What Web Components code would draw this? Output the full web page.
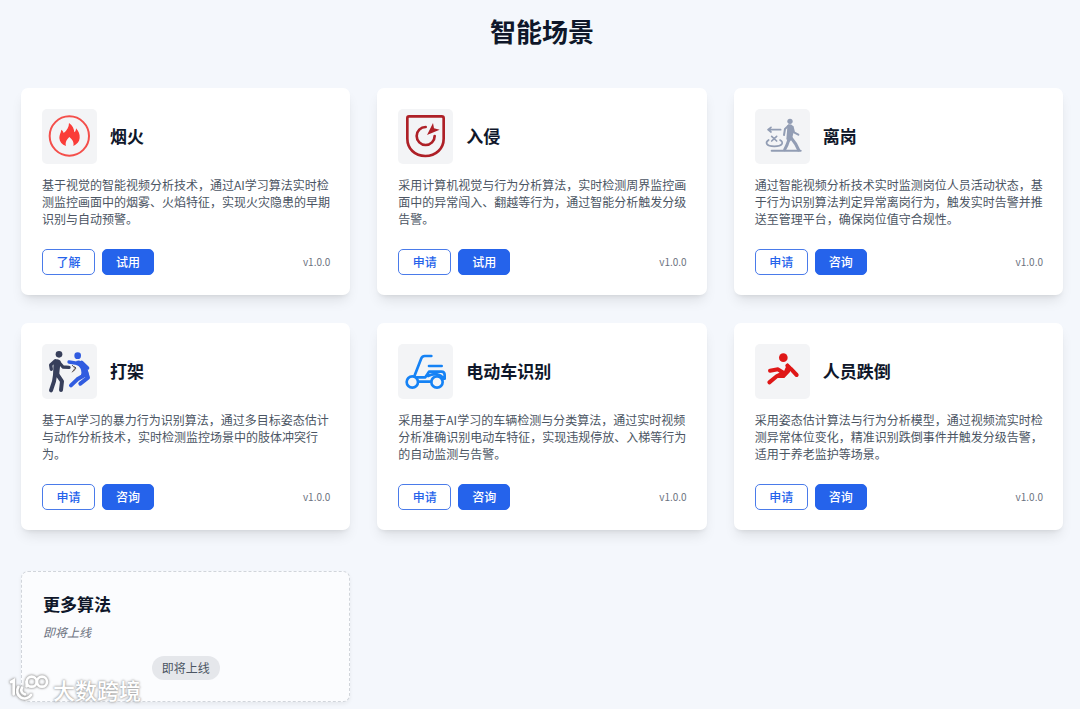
<!DOCTYPE html>
<html lang="zh-CN">
<head>
<meta charset="utf-8">
<meta name="viewport" content="width=device-width, initial-scale=1">
<title>智能场景</title>
<style>
  body { margin: 0; background: #f4f7fc; color: #0f172a; font-family: "Noto Sans CJK SC", sans-serif; }
</style>
</head>
<body>
<scene-page></scene-page>

<template id="page-template">
  <style>
    :host { display: block; position: relative; min-height: 100vh; box-sizing: border-box; padding: 12px 17px 7px 21px; }
    h1 { margin: 0 0 38px; font-size: 26px; line-height: 38px; font-weight: 700; text-align: center; }
    .grid { display: grid; grid-template-columns: repeat(3, minmax(0, 1fr)); column-gap: 27px; row-gap: 28px; }
    more-card { margin-top: 13px; }
    svg { display: block; width: 100%; height: 100%; }
    brand-mark { position: absolute; left: 9px; top: 673px; }
    @media (max-width: 860px) { .grid { grid-template-columns: repeat(2, minmax(0, 1fr)); } }
    @media (max-width: 560px) { .grid { grid-template-columns: minmax(0, 1fr); } }
  </style>
  <h1>智能场景</h1>
  <main class="grid">
    <scene-card name="烟火" secondary="了解" primary="试用" version="v1.0.0">
      <svg slot="icon" viewBox="18 15 165 165" aria-hidden="true">
        <circle cx="100" cy="96" r="59" fill="none" stroke="#f44f4b" stroke-width="6"/>
        <path fill="#fa3c38" d="M99 57c11 8 15 17 16 28 4-3 5-7 5-12 8 9 12 18 11 29-1 12-8 19-19 24 3-10-3-20-12-27-8 7-13 17-10 27-12-4-19-12-20-24 0-10 4-14 6-25 4 3 6 6 7 10 10-8 16-17 16-30z"/>
      </svg>
      基于视觉的智能视频分析技术，通过AI学习算法实时检测监控画面中的烟雾、火焰特征，实现火灾隐患的早期识别与自动预警。
    </scene-card>
    <scene-card name="入侵" secondary="申请" primary="试用" version="v1.0.0">
      <svg slot="icon" viewBox="18 15 165 165" aria-hidden="true">
        <g fill="none" stroke="#ae2027" stroke-width="8" stroke-linecap="round" stroke-linejoin="round">
          <path d="M51 37H149Q155 37 155 43V104C155 133 132 156 100 156S46 133 46 104V43Q46 37 51 37z"/>
          <path d="M101 69A27 27 0 1 0 128 96"/>
        </g>
        <path fill="#ae2027" d="M105 93L123 57L126 73L143 77z"/>
      </svg>
      采用计算机视觉与行为分析算法，实时检测周界监控画面中的异常闯入、翻越等行为，通过智能分析触发分级告警。
    </scene-card>
    <scene-card name="离岗" secondary="申请" primary="咨询" version="v1.0.0">
      <svg slot="icon" viewBox="18 15 165 165" aria-hidden="true">
        <g fill="none" stroke="#929db4" stroke-width="5" stroke-linecap="round" stroke-linejoin="round">
          <path d="M95 77H58M66 70l-9 7 9 7M68 97l15 14M83 97l-15 14"/>
          <path d="M59 108c-11 7-9 19 17 19s29-12 17-19"/>
          <path d="M68 140H155" stroke-width="6"/>
          <path d="M119 64l-11 11-3 18M131 68l4 17 13 7" stroke-width="6"/>
          <path d="M120 106l-6 17-7 14M126 101l14 19 9 18" stroke-width="9"/>
        </g>
        <circle cx="123" cy="52" r="8" fill="#929db4"/>
        <path fill="#929db4" d="M115 64q8-6 15 0l4 20-5 21-7 8-10-7 2-23z"/>
      </svg>
      通过智能视频分析技术实时监测岗位人员活动状态，基于行为识别算法判定异常离岗行为，触发实时告警并推送至管理平台，确保岗位值守合规性。
    </scene-card>
    <scene-card name="打架" secondary="申请" primary="咨询" version="v1.0.0">
      <svg slot="icon" viewBox="18 15 165 165" aria-hidden="true">
        <g fill="none" stroke-linecap="round" stroke-linejoin="round">
          <g stroke="#373f5b">
            <path d="M58 65l-14 13 2 13M68 69l13 15 18 1" stroke-width="10"/>
            <path d="M57 108l-3 19-9 27M63 105l15 22-3 26" stroke-width="12"/>
          </g>
          <path d="M109 79l8 9-8 11M116 83l4 4-7 9" stroke="#5f5552" stroke-width="3"/>
          <g stroke="#315ce0">
            <path d="M99 69l19 3 14 5M137 70l18 17" stroke-width="10"/>
            <path d="M138 80Q151 96 141 111L124 121L105 139M150 98l6 18-23 18" stroke-width="12"/>
          </g>
        </g>
        <g fill="#373f5b"><circle cx="69" cy="46" r="10"/><path d="M53 66q11-11 21 0l-5 44q-9 9-18-1z"/></g>
        <g fill="#315ce0"><circle cx="125" cy="50" r="10"/><path d="M120 66q12-5 21 4 15 17 17 35l-4 12-20-5q8-18-9-34z"/></g>
      </svg>
      基于AI学习的暴力行为识别算法，通过多目标姿态估计与动作分析技术，实时检测监控场景中的肢体冲突行为。
    </scene-card>
    <scene-card name="电动车识别" secondary="申请" primary="咨询" version="v1.0.0">
      <svg slot="icon" viewBox="18 15 165 165" aria-hidden="true">
        <g fill="none" stroke="#1582f5" stroke-width="8" stroke-linecap="round" stroke-linejoin="round">
          <circle cx="61" cy="129" r="17"/><circle cx="135" cy="129" r="17"/>
          <path d="M118 51H98Q91 51 88 58L67 112M111 81H149M79 128H117M75 115H100L111 98H148Q158 98 158 108V119M108 111Q122 104 135 106Q149 108 154 120"/>
        </g>
      </svg>
      采用基于AI学习的车辆检测与分类算法，通过实时视频分析准确识别电动车特征，实现违规停放、入梯等行为的自动监测与告警。
    </scene-card>
    <scene-card name="人员跌倒" secondary="申请" primary="咨询" version="v1.0.0">
      <svg slot="icon" viewBox="18 15 165 165" aria-hidden="true">
        <circle cx="103" cy="56" r="13" fill="#df1717"/>
        <g fill="none" stroke="#df1717" stroke-linecap="round" stroke-linejoin="round">
          <path d="M115 80l10 9 18 19" stroke-width="12"/>
          <path d="M63 95l24-4 17 11-20 9-23 19" stroke-width="12"/>
        </g>
        <path fill="#df1717" d="M116 72l9 10-2 17-17 18H82l4-12 17-4z"/>
      </svg>
      采用姿态估计算法与行为分析模型，通过视频流实时检测异常体位变化，精准识别跌倒事件并触发分级告警，适用于养老监护等场景。
    </scene-card>
    <more-card>
      更多算法
      <span slot="note">即将上线</span>
      <span slot="badge">即将上线</span>
    </more-card>
  </main>
  <brand-mark>大数跨境</brand-mark>
</template>

<template id="card-template">
  <style>
    :host { display: flex; flex-direction: column; box-sizing: border-box; padding: 21px 20px 20px 21px; border-radius: 7px; background: #fff; box-shadow: 0 8px 13px -3px rgba(0,0,0,.1), 0 3px 5px -3px rgba(0,0,0,.1); }
    header { display: flex; align-items: center; gap: 13px; margin-bottom: 12px; }
    .tile { flex: none; width: 55px; height: 55px; border-radius: 5px; background: #f3f4f6; overflow: hidden; }
    h2 { margin: 0; padding-bottom: 2px; font-size: 17px; line-height: 24px; font-weight: 700; }
    p { margin: 0 0 22px; color: #4b5563; font-size: 12px; line-height: 17px; }
    footer { display: flex; align-items: center; gap: 7px; margin-top: auto; }
    button { box-sizing: border-box; min-width: 52px; height: 26px; padding: 0 12px 2px; border: 1px solid #2563eb; border-radius: 5px; font: 500 12px/17px "Noto Sans CJK SC", sans-serif; color: #2563eb; background: #fff; cursor: pointer; }
    .secondary { min-width: 53px; border-color: #4a7bea; }
    .primary { background: #2563eb; color: #fff; }
    small { margin-left: auto; color: #6b7280; font-size: 10px; line-height: 14px; }
  </style>
  <header><div class="tile"><slot name="icon"></slot></div><h2></h2></header>
  <p><slot></slot></p>
  <footer><button type="button" class="secondary"></button><button type="button" class="primary"></button><small></small></footer>
</template>

<template id="more-template">
  <style>
    :host { display: flex; flex-direction: column; box-sizing: border-box; padding: 20px 21px 21px; border: 1px dashed #d1d5db; border-radius: 7px; background: #fbfcfe; box-shadow: 0 2px 4px rgba(0,0,0,.06); }
    h2 { margin: 0 0 7px; font-size: 17px; line-height: 24px; font-weight: 700; }
    p { margin: 0 0 16px; font-size: 12px; line-height: 17px; font-style: italic; color: #6b7280; }
    .badge { align-self: center; padding: 3px 10px 4px; border-radius: 12px; background: #e5e7eb; color: #4b5563; font-size: 12px; line-height: 17px; }
  </style>
  <h2><slot></slot></h2>
  <p><slot name="note"></slot></p>
  <div class="badge"><slot name="badge"></slot></div>
</template>

<template id="brand-template">
  <style>
    :host { display: flex; align-items: center; gap: 4px; color: #fff; font-size: 22px; line-height: 32px; font-weight: 500; text-shadow: 0 0 2px #999, 0 0 3px #aaa; pointer-events: none; }
    svg { width: 40px; height: 32px; filter: drop-shadow(0 0 1px #999) drop-shadow(0 0 1px #bbb); }
  </style>
  <svg viewBox="0 0 120 96" fill="none" stroke="#fff" stroke-width="8" stroke-linecap="round" aria-hidden="true">
    <path d="M6 27l8-5v42M28 42A22 22 0 1 0 66 66M39 44a13 13 0 0 0 9 20"/>
    <path d="M53 40V26"/><circle cx="68" cy="26" r="15"/><circle cx="99" cy="26" r="15"/>
  </svg>
  <span><slot></slot></span>
</template>

<script>
  class TemplateElement extends HTMLElement {
    constructor() {
      super();
      const source = document.getElementById(this.constructor.template);
      this.attachShadow({ mode: "open" }).append(source.content.cloneNode(true));
    }
  }
  class SceneCard extends TemplateElement {
    static template = "card-template";
    connectedCallback() {
      const put = (selector, name) => {
        this.shadowRoot.querySelector(selector).textContent = this.getAttribute(name);
      };
      put("h2", "name");
      put(".secondary", "secondary");
      put(".primary", "primary");
      put("small", "version");
    }
  }
  class MoreCard extends TemplateElement { static template = "more-template"; }
  class BrandMark extends TemplateElement { static template = "brand-template"; }
  class ScenePage extends TemplateElement { static template = "page-template"; }
  customElements.define("scene-card", SceneCard);
  customElements.define("more-card", MoreCard);
  customElements.define("brand-mark", BrandMark);
  customElements.define("scene-page", ScenePage);
</script>
</body>
</html>
